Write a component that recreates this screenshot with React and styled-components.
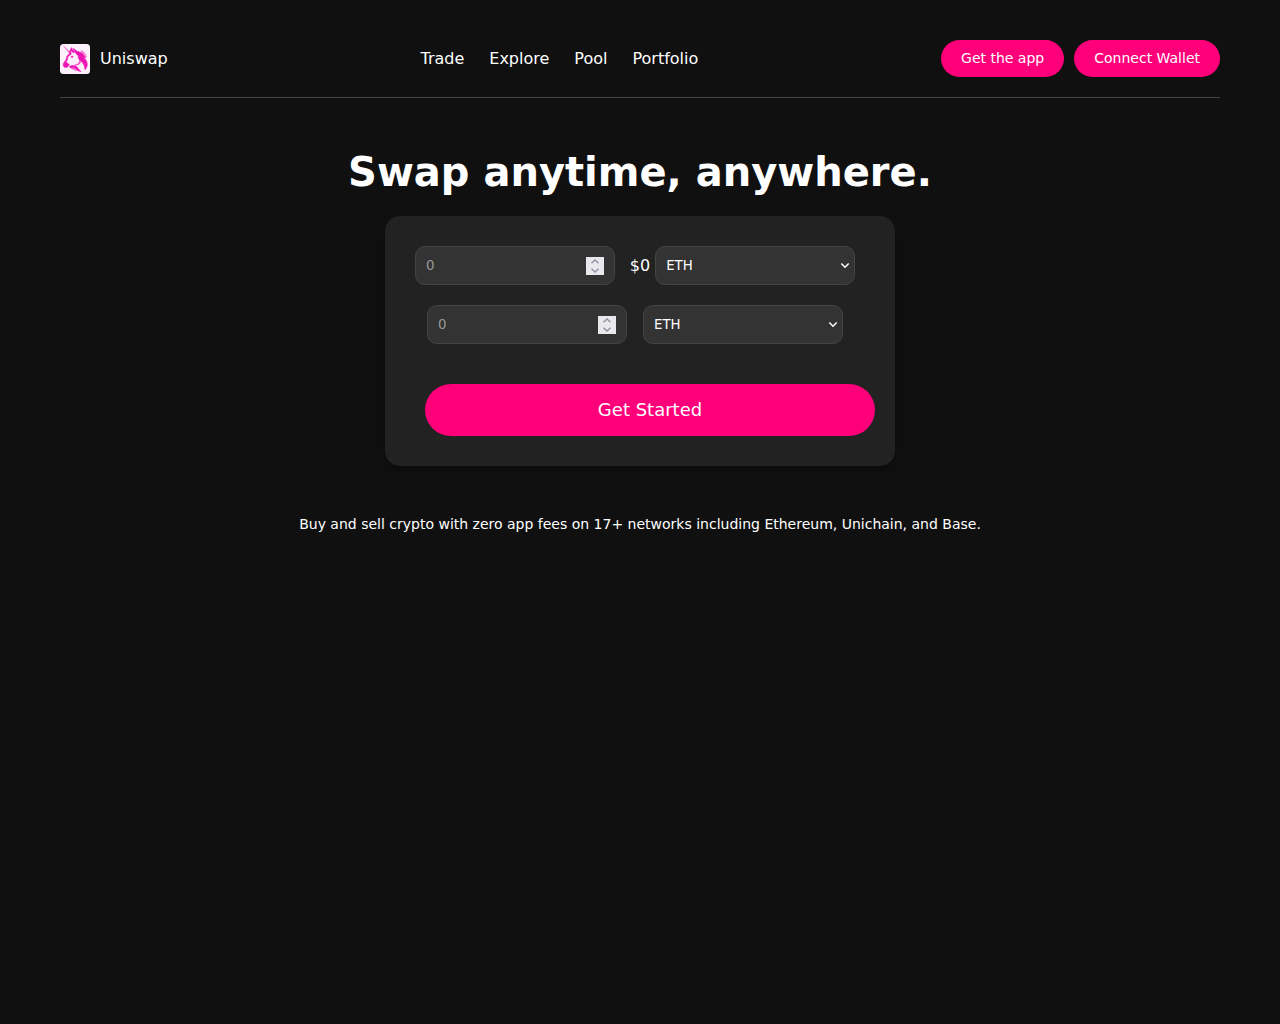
import React, { useState } from "react"
import styled, { createGlobalStyle } from "styled-components"

const links = ["Trade", "Explore", "Pool", "Portfolio"]
const tokens = ["ETH", "USDC", "DAI"]

export default function App() {
  return (
    <>
      <GlobalStyle />
      <Header>
        <Brand href="#">
          <UnicornLogo />
          Uniswap
        </Brand>
        <Nav>
          {links.map(link => (
            <NavLink key={link} href={`#${link.toLowerCase()}`}>
              {link}
            </NavLink>
          ))}
        </Nav>
        <Actions>
          <Button>Get the app</Button>
          <Button>Connect Wallet</Button>
        </Actions>
      </Header>
      <Main>
        <Title>Swap anytime, anywhere.</Title>
        <Card>
          <Row $gap={5}>
            <AmountField label="Sell amount" />
            <span>$0</span>
            <TokenPicker label="Sell token" />
          </Row>
          <Row $gap={6}>
            <AmountField label="Buy amount" />
            <TokenPicker label="Buy token" />
          </Row>
          <StartButton>Get Started</StartButton>
        </Card>
        <Description>
          Buy and sell crypto with zero app fees on 17+ networks including
          Ethereum, Unichain, and Base.
        </Description>
      </Main>
    </>
  )
}

function AmountField({ label }) {
  const [amount, setAmount] = useState("")
  const step = by => setAmount(String(Math.max(0, Number(amount) + by)))

  return (
    <Field>
      <AmountInput
        type="number"
        placeholder="0"
        aria-label={label}
        value={amount}
        onChange={e => setAmount(e.target.value)}
      />
      <Stepper>
        <StepButton tabIndex={-1} aria-label="Increase" onClick={() => step(1)}>
          <svg width="8" height="5" viewBox="0 0 8 5">
            <path d="M0.500 4.200 L4 1 L7.500 4.200" />
          </svg>
        </StepButton>
        <StepButton tabIndex={-1} aria-label="Decrease" onClick={() => step(-1)}>
          <svg width="8" height="5" viewBox="0 0 8 5">
            <path d="M0.500 0.800 L4 4 L7.500 0.800" />
          </svg>
        </StepButton>
      </Stepper>
    </Field>
  )
}

function TokenPicker({ label }) {
  return (
    <Field>
      <TokenSelect aria-label={label} defaultValue="ETH">
        {tokens.map(token => (
          <option key={token}>{token}</option>
        ))}
      </TokenSelect>
      <Arrow viewBox="0 0 10 7" aria-hidden="true">
        <path d="M1.300 1.500 L5 5.200 L8.700 1.500" />
      </Arrow>
    </Field>
  )
}

function UnicornLogo() {
  return (
    <Logo viewBox="0 0 120 120" aria-hidden="true">
      <rect width="120" height="120" rx="14" fill="#fdf2fc" />
      <g fill="#ee14b4" stroke="#ee14b4" strokeWidth="2" strokeLinejoin="round">
        <path d="M14 8 L43 35 L39 40 Z" opacity="0.6" />
        <path d="M39 40 C38 29 42 20 47 14 C48 22 52 26 59 31 L55 36 C50 33 47 30 45 27 C43 32 44 37 45 41 Z" />
        <path d="M52 18 C59 20 65 25 69 32 L62 33 C59 27 55 24 52 18 Z" />
        <path d="M39 38 C29 44 25 51 25 59 C24 66 17 71 14 77 C10 86 15 94 24 94 C31 93 36 88 37 80 C31 79 27 75 25 70 C30 66 31 60 31 54 C33 48 38 45 44 42 Z" />
        <path d="M43 50 L53 49 L50 54 C47 55 45 53 43 50 Z" />
        <path d="M60 30 C79 27 96 38 104 56 C93 54 80 52 71 46 C66 42 62 37 60 30 Z" />
        <path d="M72 50 C91 49 108 60 109 79 C110 89 106 97 100 103 C99 87 93 76 84 69 C77 64 73 58 72 50 Z" />
        <path d="M84 25 C97 30 105 41 107 52 C100 42 92 36 84 33 Z" opacity="0.5" />
        <path d="M79 64 C84 71 82 79 75 82 C69 85 64 84 59 84 C66 81 75 80 77 72 Z" opacity="0.75" />
        <path d="M37 90 C49 83 65 85 71 95 C76 103 80 107 85 110 C75 110 68 106 63 100 C58 94 51 95 43 97 Z" />
        <path d="M47 99 C55 95 63 99 64 108 C59 103 54 101 47 99 Z" opacity="0.7" />
      </g>
    </Logo>
  )
}

const GlobalStyle = createGlobalStyle`
  * {
    box-sizing: border-box;
  }
  body {
    margin: 0;
    background: #101010;
    color: #fff;
    font-family: "DejaVu Sans", sans-serif;
    font-size: 16px;
  }
`
const Header = styled.header`
  display: flex;
  justify-content: space-between;
  align-items: center;
  margin: 0 60px;
  padding: 40px 0 20px;
  border-bottom: 1px solid #444;
`
const Brand = styled.a`
  display: flex;
  align-items: center;
  gap: 10px;
  padding-right: 10px;
  color: inherit;
  text-decoration: none;
`
const Logo = styled.svg`
  width: 30px;
  height: 30px;
`
const Nav = styled.nav`
  display: flex;
  gap: 25px;
`
const NavLink = styled.a`
  color: inherit;
  text-decoration: none;
`
const Actions = styled.div`
  display: flex;
  gap: 10px;
`
const Button = styled.button`
  padding: 10px 20px;
  border: none;
  border-radius: 30px;
  background: #ff007a;
  color: #fff;
  font-family: inherit;
  font-size: 14px;
  line-height: 17px;
  cursor: pointer;
`
const Main = styled.main`
  display: flex;
  flex-direction: column;
  align-items: center;
  padding: 50px 20px;
  text-align: center;
`
const Title = styled.h1`
  margin: 0 0 20px;
  font-size: 40px;
  line-height: 48px;
`
const Card = styled.section`
  width: 100%;
  max-width: 510px;
  padding: 30px;
  border-radius: 15px;
  background: #222;
  box-shadow: 0 4px 10px rgba(0, 0, 0, 0.3);
`
const Row = styled.div`
  display: flex;
  justify-content: center;
  align-items: center;
  gap: ${props => props.$gap}px;
  margin-bottom: 20px;
`
const Field = styled.div`
  position: relative;
  display: flex;
  width: 200px;
  margin-right: 10px;
`
const AmountInput = styled.input`
  width: 100%;
  height: 39px;
  padding: 10px;
  border: 1px solid #444;
  border-radius: 10px;
  background: #333;
  color: #fff;
  font-family: inherit;
  line-height: 17px;
  appearance: textfield;

  &::placeholder {
    color: #999;
  }
  &::-webkit-inner-spin-button {
    display: none;
  }
`
const Stepper = styled.div`
  position: absolute;
  top: 11px;
  right: 11px;
  display: flex;
  flex-direction: column;
  width: 18px;
  height: 18px;
  background: #e9e9ed;
`
const StepButton = styled.button`
  display: flex;
  flex: 1;
  align-items: center;
  justify-content: center;
  padding: 0;
  border: none;
  background: none;

  path {
    fill: none;
    stroke: #8f8f9d;
    stroke-width: 1.3;
  }
`
const TokenSelect = styled.select`
  width: 100%;
  height: 39px;
  padding: 10px;
  border: 1px solid #444;
  border-radius: 10px;
  background: #333;
  color: #fff;
  font-family: inherit;
  line-height: 17px;
  appearance: none;
`
const Arrow = styled.svg`
  position: absolute;
  top: 16px;
  right: 5px;
  width: 10px;
  height: 7px;
  pointer-events: none;

  path {
    fill: none;
    stroke: #fff;
    stroke-width: 1.5;
  }
`
const StartButton = styled(Button)`
  width: 100%;
  margin: 20px 0 0 10px;
  padding: 15px 30px;
  font-size: 18px;
  line-height: 22px;
`
const Description = styled.p`
  margin: 50px 0 0;
  font-size: 14px;
`
